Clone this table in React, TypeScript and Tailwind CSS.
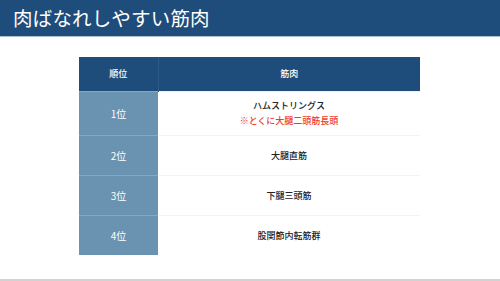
const rows = [
  { rank: "1位", name: "ハムストリングス", note: "※とくに大腿二頭筋長頭" },
  { rank: "2位", name: "大腿直筋" },
  { rank: "3位", name: "下腿三頭筋" },
  { rank: "4位", name: "股関節内転筋群" },
];

const font = "font-['Noto_Sans_CJK_JP','Noto_Sans',sans-serif]";

export default function App() {
  return (
    <div className={`w-[500px] h-[281px] bg-white flex flex-col overflow-hidden ${font}`}>
      <header className="h-[37px] bg-[#1f4d7b] border-b border-[#aebfd1] flex items-center pl-[13px]">
        <h1 className="text-white text-[19.5px] leading-none tracking-[0.2px]">肉ばなれしやすい筋肉</h1>
      </header>

      <div className="flex-1 pt-[20px] pl-[79px]">
        <table className="w-[341px] border-collapse text-[9px]">
          <thead>
            <tr className="h-[34px] bg-[#1f4d7b] text-white">
              <th className="w-[79px] font-medium border-r border-[#2d5a86]">順位</th>
              <th className="font-medium">筋肉</th>
            </tr>
          </thead>
          <tbody>
            {rows.map((r, i) => (
              <tr key={r.rank} className={i === 0 ? "h-[44px]" : "h-[40px]"}>
                <td className="bg-[#6993b1] text-white text-center text-[10px] border-t border-[#85a8c1]">
                  {r.rank}
                </td>
                <td className="text-center text-[#222] font-medium border-t border-[#f3f3f3] leading-[15px]">
                  <div>{r.name}</div>
                  {r.note && <div className="text-[#ee3b2b]">{r.note}</div>}
                </td>
              </tr>
            ))}
          </tbody>
        </table>
      </div>

      <div className="h-[2px] bg-[#d2d2d2] mb-0" />
    </div>
  );
}
